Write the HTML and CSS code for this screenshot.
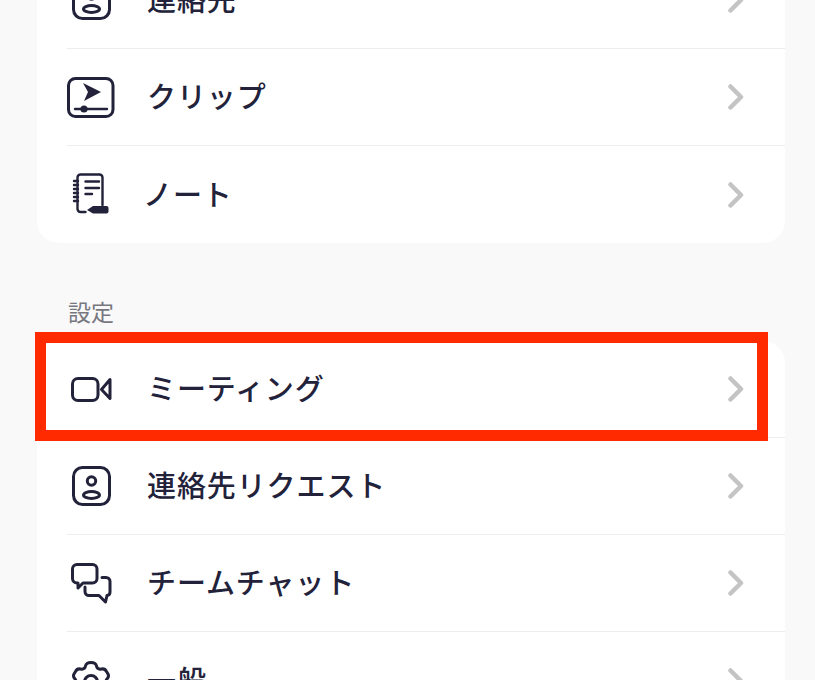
FILE: index.html
```html
<!DOCTYPE html>
<html lang="ja">
<head>
<meta charset="utf-8">
<title>設定</title>
<link rel="stylesheet" href="styles.css">
</head>
<body>
<main class="page">
  <section class="card card-first">
    <div class="row">
      <svg class="icon" viewBox="0 0 48 48"><rect x="6.5" y="5.5" width="36" height="37" rx="9" class="st"/><circle cx="24.5" cy="19" r="4.2" class="st"/><ellipse cx="24.5" cy="33" rx="8" ry="3.4" class="st"/></svg>
      <span class="label">連絡先</span>
      <svg class="chev" viewBox="0 0 16 26"><path d="M2.5 2.5 13 13 2.5 23.5"/></svg>
    </div>
    <div class="row">
      <svg class="icon" viewBox="0 0 48 48"><rect x="1.5" y="5.5" width="44.500" height="38" rx="7" class="st"/><path d="M16 10 34 19 17 28 21 19Z" class="fl"/><path d="M8 36H40" class="st thin"/><circle cx="17" cy="36" r="3.6" class="fl"/></svg>
      <span class="label">クリップ</span>
      <svg class="chev" viewBox="0 0 16 26"><path d="M2.5 2.5 13 13 2.5 23.5"/></svg>
    </div>
    <div class="row">
      <svg class="icon" viewBox="0 0 48 48"><path d="M10.5 33V6.5a3 3 0 0 1 3-3h19a3 3 0 0 1 3 3V34M10.5 33v5a3 3 0 0 0 3 3h5" class="st thin"/><path d="M18.500 10.500H32M18.500 17H32M18.500 23H25" class="st thin"/><path d="M7 10H11M7 14H11M7 18H11M7 22H11M7 26H11M7 30H11" class="st thin"/><path d="M20 39 26 35H39.500a2 2 0 0 1 2 2v3.500a2 2 0 0 1-2 2H26Z" class="fl"/></svg>
      <span class="label label-note">ノート</span>
      <svg class="chev" viewBox="0 0 16 26"><path d="M2.5 2.5 13 13 2.5 23.5"/></svg>
    </div>
  </section>

  <h2 class="section-title">設定</h2>

  <section class="card">
    <div class="row">
      <svg class="icon" viewBox="0 0 48 48"><rect x="5.500" y="13.500" width="25.500" height="22" rx="5.500" class="st"/><path d="M43 14.500 34.500 24.500 43 33.500Z" class="st"/></svg>
      <span class="label">ミーティング</span>
      <svg class="chev" viewBox="0 0 16 26"><path d="M2.5 2.5 13 13 2.5 23.5"/></svg>
    </div>
    <div class="row">
      <svg class="icon" viewBox="0 0 48 48"><rect x="6.5" y="5.5" width="36" height="37" rx="9" class="st"/><circle cx="24.5" cy="19" r="4.2" class="st"/><ellipse cx="24.5" cy="33" rx="8" ry="3.4" class="st"/></svg>
      <span class="label">連絡先リクエスト</span>
      <svg class="chev" viewBox="0 0 16 26"><path d="M2.5 2.5 13 13 2.5 23.5"/></svg>
    </div>
    <div class="row">
      <svg class="icon" viewBox="0 0 48 48"><path d="M10 5.500H25.500a4.500 4.500 0 0 1 4.500 4.500V19.500a4.500 4.500 0 0 1-4.500 4.500H16L11 29V24H10A4.500 4.500 0 0 1 5.500 19.500V10A4.500 4.500 0 0 1 10 5.500Z" class="st"/><path d="M35 18.500H39a4 4 0 0 1 4 4V33a3.500 3.500 0 0 1-3 3.500L38.500 43 32 36.500H22a4 4 0 0 1-4-4V28" class="st"/></svg>
      <span class="label">チームチャット</span>
      <svg class="chev" viewBox="0 0 16 26"><path d="M2.5 2.5 13 13 2.5 23.5"/></svg>
    </div>
    <div class="row">
      <svg class="icon" viewBox="0 0 48 48"><path d="M18.500 9C19 6.500 21 5.500 24 5.500S29 6.500 29.500 9C30 11.500 32 12.500 34.500 12C37 11.500 38.500 12.500 39.500 14.500L41 17C42 19 41.500 20.500 40 22C38.500 24 38.500 26 40 28C41.500 29.500 42 31 41 33L39.500 35.500C38.500 37.500 37 38.500 34.500 38C32 37.500 30 38.500 29.500 41C29 43.500 27 44.500 24 44.500S19 43.500 18.500 41C18 38.500 16 37.500 13.500 38C11 38.500 9.500 37.500 8.500 35.500L7 33C6 31 6.500 29.500 8 28C9.500 26 9.500 24 8 22C6.500 20.500 6 19 7 17L8.500 14.500C9.500 12.500 11 11.500 13.500 12C16 12.500 18 11.500 18.500 9Z" class="st"/><circle cx="24" cy="25" r="6.500" class="st"/></svg>
      <span class="label">一般</span>
      <svg class="chev" viewBox="0 0 16 26"><path d="M2.5 2.5 13 13 2.5 23.5"/></svg>
    </div>
  </section>
</main>
<div class="highlight"></div>
</body>
</html>
```
FILE: styles.css
```css
* { box-sizing: border-box; }
html, body { margin: 0; height: 680px; overflow: hidden; }
body {
  background: #f9f9f9;
  color: #22223a;
  font-family: "Noto Sans CJK JP", "Noto Sans", sans-serif;
  position: relative;
}
.page { padding: 0 30px 0 37px; }
.card {
  background: #fff;
  border-radius: 22px;
  padding-left: 30px;
}
.card-first { margin-top: -48px; }
.row {
  height: 97px;
  display: flex;
  align-items: center;
  border-bottom: 1px solid #ededf1;
  padding-right: 41px;
}
.row:last-child { border-bottom: 0; }
.icon { width: 48px; height: 48px; flex: none; }
.st { fill: none; stroke: #22223a; stroke-width: 3; stroke-linejoin: round; stroke-linecap: round; }
.thin { stroke-width: 2.4; }
.fl { fill: #22223a; }
.label {
  flex: 1;
  margin: 0 0 4px 32px;
  font-size: 29px;
  font-weight: 500;
  letter-spacing: 0.9px;
  line-height: 40px;
}
.label-note { margin-left: 28px; }
.chev { width: 16px; height: 26px; flex: none; }
.chev path { fill: none; stroke: #c4c4c4; stroke-width: 4.5; stroke-linecap: round; stroke-linejoin: round; }
.section-title {
  margin: 53px 0 14px 31px;
  font-size: 23px;
  line-height: 31px;
  font-weight: 400;
  color: #777780;
}
.highlight {
  position: absolute;
  left: 35px;
  top: 332px;
  width: 733px;
  height: 109px;
  border: 11.5px solid #ff2a00;
}
```
